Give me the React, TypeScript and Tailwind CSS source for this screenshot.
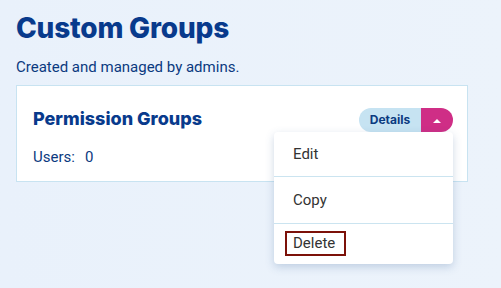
const App = () => {
  return (
    <div className="min-h-screen w-full bg-gradient-to-r from-[#e9f1fb] to-[#ecf3fb] px-4 pt-[11px] font-['Roboto',sans-serif]">
      <h1 className="font-['Inter',sans-serif] text-[28px] font-extrabold leading-[34px] tracking-[-0.2px] text-[#083a8c]">
        Custom Groups
      </h1>
      <p className="mt-[13px] text-[15px] leading-[18px] text-[#0b3a80]">
        Created and managed by admins.
      </p>
      <div className="mt-[9px] flex h-[97px] w-[452px] items-start justify-between border border-[#c8e3f1] bg-white pl-4 pr-[14px] pt-[22px]">
        <div>
          <h2 className="font-['Inter',sans-serif] text-[18px] font-extrabold leading-[22px] text-[#083a8c]">
            Permission Groups
          </h2>
          <div className="mt-[19px] flex gap-[10px] text-[15px] leading-[16px] text-[#0b3a80]">
            <span>Users:</span>
            <span>0</span>
          </div>
        </div>
        <div className="relative">
          <div className="flex h-6 overflow-hidden rounded-full">
            <button className="flex w-[62px] items-center justify-center bg-[#c6e3f2] font-['Inter',sans-serif] text-[12px] font-bold text-[#0b3a80]">
              Details
            </button>
            <button className="flex w-[32px] items-center justify-center bg-[#cf2e86]">
              <svg width="8" height="5" viewBox="0 0 8 5">
                <path d="M0 5 L4 1 L8 5 Z" fill="white" />
              </svg>
            </button>
          </div>
          <div className="absolute right-0 top-[24px] z-10 w-[179px] overflow-hidden rounded-[4px] bg-white text-[15px] text-[#333] shadow-[0_3px_8px_rgba(60,100,150,0.25)]">
            <div className="flex h-[45px] items-center border-b border-[#cbe4f0] pl-[19px]">
              Edit
            </div>
            <div className="flex h-[47px] items-center border-b border-[#cbe4f0] pl-[19px]">
              Copy
            </div>
            <div className="flex h-[40px] items-start pl-[11px] pt-[7px]">
              <span className="inline-flex h-[25px] items-center border-2 border-[#7c1109] pl-[6px] pr-[9px]">
                Delete
              </span>
            </div>
          </div>
        </div>
      </div>
    </div>
  );
};

export default App;
